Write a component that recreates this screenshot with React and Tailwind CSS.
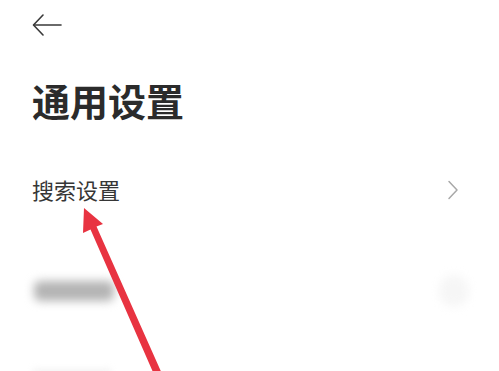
const BackArrow = () => (
  <svg width="30" height="22" viewBox="0 0 30 22" fill="none" stroke="#3a3a3a" strokeWidth="1.6" strokeLinecap="round" strokeLinejoin="round">
    <path d="M29 11H2" />
    <path d="M11 1L1.5 11L11 21" />
  </svg>
);

const Chevron = () => (
  <svg width="12" height="20" viewBox="0 0 12 20" fill="none" stroke="#a8a8a8" strokeWidth="1.5" strokeLinecap="round" strokeLinejoin="round">
    <path d="M2 1.5L10 10L2 18.5" />
  </svg>
);

const RedArrow = () => (
  <svg width="499" height="371" viewBox="0 0 499 371" className="pointer-events-none absolute left-0 top-0">
    <polygon points="84,208 103,224 96.5,226.5 163,376 156,379 90.5,229.5 83,233" fill="#e83341" />
  </svg>
);

export default function App() {
  return (
    <div
      className="relative h-[371px] w-[499px] overflow-hidden bg-white"
      style={{ fontFamily: '"Noto Sans", "Noto Sans CJK SC", sans-serif' }}
    >
      <div className="flex flex-col pl-8 pr-[40px]">
        <div className="mt-[14px] h-[22px]">
          <BackArrow />
        </div>

        <h1 className="mt-[42px] text-[38px] font-bold leading-[46px] text-[#2b2b2b]">通用设置</h1>

        <div className="mt-[51px] flex items-center justify-between">
          <span className="text-[22px] leading-[30px] text-[#363636]">搜索设置</span>
          <Chevron />
        </div>

        <div className="mt-[70px] flex items-center justify-between">
          <div className="ml-[2px] h-[20px] w-[80px] rounded-[6px] bg-[#b4b4b4] blur-[5px]" />
          <div className="mr-[-10px] h-[32px] w-[30px] rounded-full bg-[#f6f6f6] blur-[5px]" />
        </div>

        <div className="mt-[62px] h-[6px] w-[80px] rounded-full bg-[#f2f2f2] blur-[3px]" />
      </div>

      <RedArrow />
    </div>
  );
}
